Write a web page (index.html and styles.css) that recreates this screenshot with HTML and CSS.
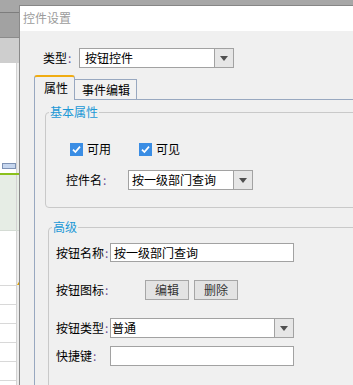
FILE: index.html
```html
<!DOCTYPE html>
<html lang="zh-CN">
<head>
    <meta charset="UTF-8">
    <meta name="viewport" content="width=device-width, initial-scale=1.0">
    <title>控件设置</title>
    <link rel="stylesheet" href="styles.css">
</head>
<body>

    <div class="screen">
        <!-- window behind the dialog -->
        <div class="backdrop">
            <div class="bd-title"></div>
            <div class="bd-menu"></div>
            <div class="bd-tool"></div>
            <div class="bd-main">
                <div class="bd-btn"></div>
                <div class="bd-green"></div>
                <div class="bd-grid">
                    <div class="bd-mark"></div>
                    <div class="bd-row"></div>
                    <div class="bd-row"></div>
                    <div class="bd-row"></div>
                    <div class="bd-row"></div>
                    <div class="bd-row"></div>
                    <div class="bd-row"></div>
                </div>
            </div>
        </div>

        <div class="dialog">
            <div class="dlg-title">控件设置</div>
            <div class="dlg-body">

                <div class="field type-row">
                    <span class="label lbl-type">类型<span class="colon">:</span></span>
                    <div class="combo combo-type">
                        <span class="combo-text">按钮控件</span>
                        <span class="combo-drop"></span>
                    </div>
                </div>

                <div class="tabs">
                    <div class="tab tab-active">属性</div>
                    <div class="tab tab-idle">事件编辑</div>
                </div>

                <div class="panel">
                    <div class="group group-basic">
                        <div class="group-title">基本属性</div>
                        <div class="checks">
                            <label class="check">
                                <svg width="13" height="13" viewBox="0 0 13 13"><rect width="13" height="13" fill="#3a8de4"/><path d="M3 6.6 L5.4 9 L10 3.6" fill="none" stroke="#fff" stroke-width="1.7"/></svg>
                                <span>可用</span>
                            </label>
                            <label class="check">
                                <svg width="13" height="13" viewBox="0 0 13 13"><rect width="13" height="13" fill="#3a8de4"/><path d="M3 6.6 L5.4 9 L10 3.6" fill="none" stroke="#fff" stroke-width="1.7"/></svg>
                                <span>可见</span>
                            </label>
                        </div>
                        <div class="field name-row">
                            <span class="label lbl-name">控件名<span class="colon">:</span></span>
                            <div class="combo combo-name">
                                <span class="combo-text">按一级部门查询</span>
                                <span class="combo-drop"></span>
                            </div>
                        </div>
                    </div>

                    <div class="group group-adv">
                        <div class="group-title">高级</div>
                        <div class="field adv-row row-caption">
                            <span class="label lbl-adv">按钮名称<span class="colon">:</span></span>
                            <div class="input input-caption">按一级部门查询</div>
                        </div>
                        <div class="field adv-row row-icon">
                            <span class="label lbl-icon">按钮图标<span class="colon">:</span></span>
                            <button class="btn">编辑</button>
                            <button class="btn">删除</button>
                        </div>
                        <div class="field adv-row row-kind">
                            <span class="label lbl-adv">按钮类型<span class="colon">:</span></span>
                            <div class="combo combo-kind">
                                <span class="combo-text">普通</span>
                                <span class="combo-drop"></span>
                            </div>
                        </div>
                        <div class="field adv-row row-key">
                            <span class="label lbl-adv">快捷键<span class="colon">:</span></span>
                            <div class="input input-key"></div>
                        </div>
                    </div>
                </div>

            </div>
        </div>
    </div>

</body>
</html>
```

FILE: styles.css
```css
html, body {
    margin: 0;
    padding: 0;
    width: 353px;
    height: 385px;
    overflow: hidden;
}
body {
    font-family: "Noto Sans CJK SC", "Microsoft YaHei", sans-serif;
    font-size: 12px;
    color: #000;
    background: #fff;
}
.screen {
    position: relative;
    width: 353px;
    height: 385px;
    overflow: hidden;
}

/* backdrop window */
.backdrop {
    width: 353px;
}
.bd-title {
    height: 12px;
    background: #a7a7a7;
    border-bottom: 1px solid #7d7d7d;
}
.bd-menu {
    height: 24px;
    background: #a2a2a2;
    border-bottom: 1px solid #8b8b8b;
}
.bd-tool {
    height: 25px;
    background: #cecece;
}
.bd-main {
    height: 322px;
    background: linear-gradient(to right, #fff 0 16px, #d3d3d3 16px 17px, #ececec 17px);
    overflow: hidden;
}
.bd-btn {
    width: 12px;
    height: 4px;
    margin: 100px 0 0 2px;
    background: #c6d6ee;
    border: 1px solid #7e92b4;
}
.bd-green {
    height: 55px;
    margin-top: 4px;
    border-top: 2px solid #8bc11c;
    border-bottom: 1px solid #d4dbd4;
    background: linear-gradient(to right, #e6ede5 0 16px, #d3d3d3 16px 17px, #e6ede5 17px);
}
.bd-grid {
    padding-top: 49px;
}
.bd-mark {
    width: 0;
    height: 0;
    margin-left: 17px;
    border-top: 5px solid transparent;
    border-right: 3px solid #e0a200;
}
.bd-row {
    width: 16px;
    height: 18px;
    border-top: 1px solid #d8d8d8;
}

/* dialog */
.dialog {
    position: absolute;
    left: 19px;
    top: 5px;
    width: 360px;
    height: 400px;
    border-top: 1px solid #868686;
    border-left: 1px solid #8a8a8a;
    background: #f0f0f0;
}
.dlg-title {
    height: 25px;
    line-height: 23px;
    padding-left: 3px;
    background: #fff;
    color: #9c9c9c;
}
.dlg-body {
    padding: 17px 0 0 14px;
}

.field {
    display: flex;
    align-items: center;
    height: 20px;
}
.label {
    flex: none;
    line-height: 14px;
    white-space: nowrap;
}
.colon {
    color: #6c4a92;
    margin-left: 1px;
}
.combo {
    display: flex;
    box-sizing: border-box;
    height: 20px;
    border: 1px solid #a2a2a2;
    background: #fff;
}
.combo-text {
    flex: 1;
    line-height: 18px;
    white-space: nowrap;
    overflow: hidden;
}
.combo-drop {
    flex: none;
    width: 18px;
    border-left: 1px solid #a2a2a2;
    background: #e6e6e6;
    display: flex;
    align-items: center;
    justify-content: center;
}
.combo-drop::after {
    content: "";
    border-left: 4px solid transparent;
    border-right: 4px solid transparent;
    border-top: 5px solid #4f4f4f;
}
.input {
    box-sizing: border-box;
    height: 20px;
    border: 1px solid #a2a2a2;
    background: #fff;
    line-height: 18px;
    white-space: nowrap;
}

.type-row {
    margin-left: 9px;
}
.lbl-type {
    width: 36px;
}
.combo-type {
    width: 155px;
}
.combo-type .combo-text {
    padding-left: 5px;
}

/* tabs */
.tabs {
    display: flex;
    align-items: flex-end;
    height: 24px;
    margin-top: 7px;
    position: relative;
    z-index: 1;
}
.tab {
    box-sizing: border-box;
    white-space: nowrap;
}
.tab-active {
    width: 41px;
    height: 25px;
    margin-bottom: -1px;
    padding-left: 9px;
    line-height: 22px;
    border: 1px solid #98a8c0;
    border-top: 2px solid #f0ac12;
    border-bottom: none;
    border-radius: 3px 3px 0 0;
    background: #f0f0f0;
}
.tab-idle {
    width: 62px;
    height: 20px;
    padding-left: 7px;
    line-height: 19px;
    border-top: 1px solid #98a8c0;
    border-right: 1px solid #98a8c0;
    background: #f2f2f2;
}

.panel {
    height: 300px;
    border-top: 1px solid #98a8c0;
    border-left: 1px solid #98a8c0;
    overflow: hidden;
}

/* group boxes */
.group {
    box-sizing: border-box;
    width: 400px;
    border: 1px solid #c9c9c9;
    border-radius: 4px;
}
.group-title {
    width: fit-content;
    margin: -8px 0 0 3px;
    padding: 0 1px;
    line-height: 14px;
    color: #1b98d6;
    background: #f0f0f0;
}
.group-basic {
    margin: 12px 0 0 10px;
    padding-bottom: 17px;
}
.group-adv {
    height: 220px;
    margin: 19px 0 0 13px;
}

.checks {
    display: flex;
    align-items: center;
    height: 14px;
    margin: 23px 0 0 24px;
    gap: 28px;
}
.check {
    display: flex;
    align-items: center;
    gap: 4px;
    line-height: 14px;
}
.check svg {
    display: block;
}

.name-row {
    margin: 14px 0 0 20px;
}
.lbl-name {
    width: 62px;
}
.combo-name {
    width: 125px;
}
.combo-name .combo-text {
    padding-left: 3px;
}

.adv-row {
    margin-left: 7px;
}
.lbl-adv {
    width: 54px;
}
.lbl-icon {
    width: 89px;
}
.row-caption {
    height: 19px;
    margin-top: 9px;
}
.input-caption {
    width: 184px;
    height: 19px;
    line-height: 17px;
    padding-left: 3px;
}
.row-icon {
    margin-top: 18px;
}
.btn {
    box-sizing: border-box;
    width: 44px;
    height: 20px;
    margin: 0 5px 0 0;
    padding: 0;
    font: inherit;
    line-height: 18px;
    color: #333;
    background: #e3e3e3;
    border: 1px solid #a6a6a6;
}
.row-kind {
    margin-top: 18px;
}
.combo-kind {
    width: 184px;
}
.combo-kind .combo-text {
    padding-left: 1px;
}
.row-key {
    margin-top: 8px;
}
.input-key {
    width: 184px;
}
```
